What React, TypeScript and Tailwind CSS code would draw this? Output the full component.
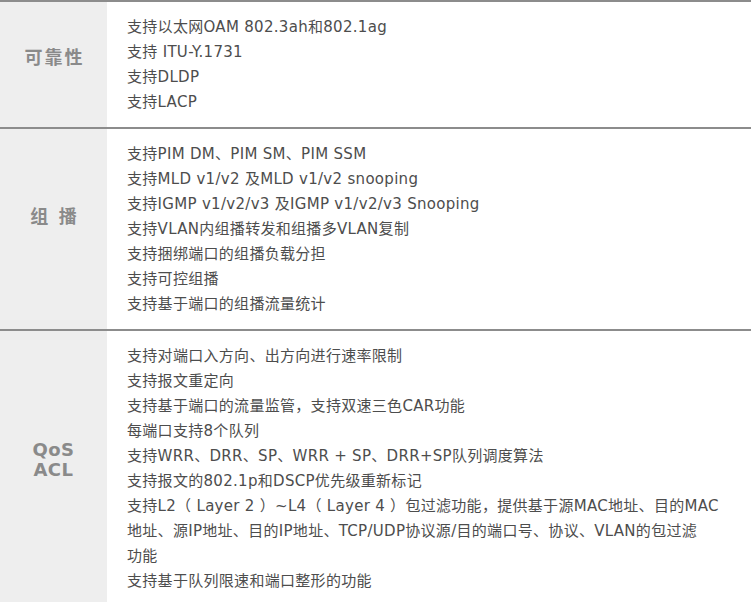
const rows: { label: string[]; pt: string; items: string[][] }[] = [
  {
    label: ['可靠性'],
    pt: 'pt-[46px]',
    items: [
      ['支持以太网OAM 802.3ah和802.1ag'],
      ['支持 ITU-Y.1731'],
      ['支持DLDP'],
      ['支持LACP'],
    ],
  },
  {
    label: ['组 播'],
    pt: 'pt-[78px]',
    items: [
      ['支持PIM DM、PIM SM、PIM SSM'],
      ['支持MLD v1/v2 及MLD v1/v2 snooping'],
      ['支持IGMP v1/v2/v3 及IGMP v1/v2/v3 Snooping'],
      ['支持VLAN内组播转发和组播多VLAN复制'],
      ['支持捆绑端口的组播负载分担'],
      ['支持可控组播'],
      ['支持基于端口的组播流量统计'],
    ],
  },
  {
    label: ['QoS', 'ACL'],
    pt: 'pt-[109px]',
    items: [
      ['支持对端口入方向、出方向进行速率限制'],
      ['支持报文重定向'],
      ['支持基于端口的流量监管，支持双速三色CAR功能'],
      ['每端口支持8个队列'],
      ['支持WRR、DRR、SP、WRR + SP、DRR+SP队列调度算法'],
      ['支持报文的802.1p和DSCP优先级重新标记'],
      [
        '支持L2（ Layer 2 ）~L4（ Layer 4 ）包过滤功能，提供基于源MAC地址、目的MAC',
        '地址、源IP地址、目的IP地址、TCP/UDP协议源/目的端口号、协议、VLAN的包过滤',
        '功能',
      ],
      ['支持基于队列限速和端口整形的功能'],
    ],
  },
];

export default function App() {
  return (
    <div
      className="w-[751px] h-[602px] overflow-hidden bg-white border-t-2 border-[#8c8c8c]"
      style={{ fontFamily: '"DejaVu Sans", "Noto Sans CJK SC", sans-serif' }}
    >
      {rows.map((row, i) => (
        <div key={i} className={`flex ${i > 0 ? 'border-t-2 border-[#8c8c8c]' : ''}`}>
          <div className={`w-[107px] shrink-0 bg-[#eeeeee] ${row.pt} flex flex-col items-center`}>
            {row.label.map(l => (
              <div
                key={l}
                className={`text-[18px] leading-[20px] font-bold text-[#8a8a8a] ${
                  i === 2 ? 'tracking-[0.5px]' : 'tracking-[2px] pl-[2px]'
                }`}
              >
                {l}
              </div>
            ))}
          </div>
          <div className="flex-1 pl-5 pt-[13px] pb-[12px] text-[15px] leading-[25px] text-[#4d4d4d] tracking-[0.3px]">
            {row.items.map((lines, j) => (
              <div key={j}>
                {lines.map((ln, k) => (
                  <div key={k} className="whitespace-nowrap">
                    {ln}
                  </div>
                ))}
              </div>
            ))}
            {i === 2 && <div className="h-10" />}
          </div>
        </div>
      ))}
    </div>
  );
}
